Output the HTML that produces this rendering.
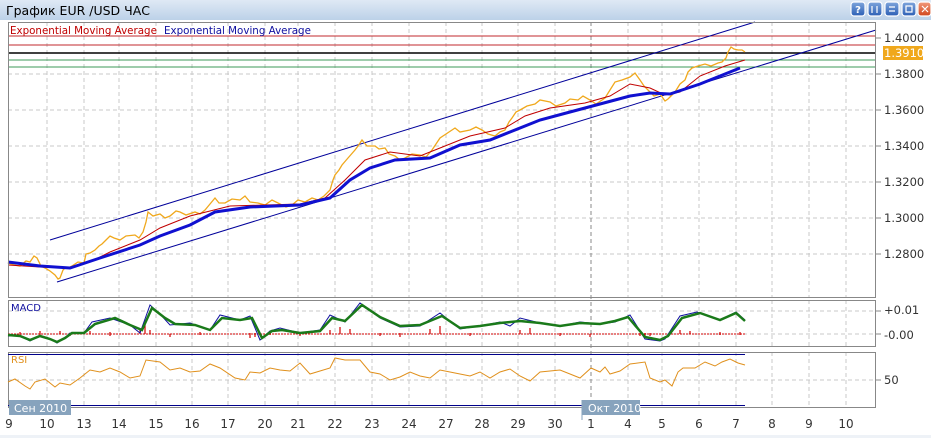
<!DOCTYPE html>
<html><head><meta charset="utf-8"><style>
body{margin:0;width:931px;height:438px;background:#fff;overflow:hidden;font-family:"Liberation Sans","DejaVu Sans",sans-serif}
</style></head><body>
<svg width="931" height="438" viewBox="0 0 931 438" xmlns="http://www.w3.org/2000/svg" font-family="DejaVu Sans, Liberation Sans, sans-serif">
<defs><linearGradient id="tb" x1="0" y1="0" x2="0" y2="1"><stop offset="0" stop-color="#dfe9f5"/><stop offset="1" stop-color="#bcd1e8"/></linearGradient>
<linearGradient id="bt" x1="0" y1="0" x2="0" y2="1"><stop offset="0" stop-color="#7fa6dc"/><stop offset="1" stop-color="#2c5fb5"/></linearGradient>
<linearGradient id="bx" x1="0" y1="0" x2="0" y2="1"><stop offset="0" stop-color="#f29a7c"/><stop offset="1" stop-color="#d0461c"/></linearGradient></defs>
<rect x="0" y="0" width="931" height="20" fill="url(#tb)"/>
<text x="6" y="15" font-size="12.5" fill="#000">График EUR /USD  ЧАС</text>
<g stroke="#fff" stroke-width="1.2" fill="none">
<rect x="851" y="2" width="14" height="14" rx="3" fill="url(#bt)"/>
<rect x="868" y="2" width="14" height="14" rx="3" fill="url(#bt)"/>
<rect x="885" y="2" width="14" height="14" rx="3" fill="url(#bt)"/>
<rect x="902" y="2" width="14" height="14" rx="3" fill="url(#bt)"/>
<rect x="918" y="2" width="13" height="14" rx="3" fill="url(#bx)"/>
<path d="M872 6v7M877 6v7M889 7h6M889 11h6M906 6h6v6h-6z M922 6l6 6M928 6l-6 6"/>
</g>
<text x="858" y="13" font-size="10" fill="#fff" text-anchor="middle" font-weight="bold">?</text>

<g stroke="#c8c8c8" stroke-dasharray="4,3" stroke-width="1">
<path d="M47 22V297M84 22V297M119 22V297M156 22V297M192 22V297M228 22V297M265 22V297M298 22V297M335 22V297M372 22V297M409 22V297M446 22V297M482 22V297M518 22V297M555 22V297M628 22V297M662 22V297M699 22V297M736 22V297M772 22V297M809 22V297M846 22V297"/>
<path d="M8 74H876M8 110H876M8 146H876M8 182H876M8 218H876M8 254H876"/>
<path d="M47 300V346M84 300V346M119 300V346M156 300V346M192 300V346M228 300V346M265 300V346M298 300V346M335 300V346M372 300V346M409 300V346M446 300V346M482 300V346M518 300V346M555 300V346M628 300V346M662 300V346M699 300V346M736 300V346M772 300V346M809 300V346M846 300V346 M8 311H876M8 334H876"/>
<path d="M47 352V407M84 352V407M119 352V407M156 352V407M192 352V407M228 352V407M265 352V407M298 352V407M335 352V407M372 352V407M409 352V407M446 352V407M482 352V407M518 352V407M555 352V407M628 352V407M662 352V407M699 352V407M736 352V407M772 352V407M809 352V407M846 352V407 M8 380H876"/>
</g>
<path d="M591 22V407" stroke="#888" stroke-dasharray="4,3"/>
<path d="M8 36H876M8 45H876" stroke="#c0282c" stroke-width="1"/>
<path d="M8 53H876" stroke="#000" stroke-width="1.5"/>
<path d="M8 60H876M8 67H876" stroke="#3c9a5a" stroke-width="1"/>
<path d="M50 240L755 22" stroke="#00009a" stroke-width="1"/>
<path d="M57 282L876 30" stroke="#00009a" stroke-width="1"/>
<polyline fill="none" stroke="#f0a81c" stroke-width="1.3" points="8,263 14,265 20,266 26,261 30,262 34,256 37,258 41,266 45,268 50,271 55,275 58,279 60,278 63,270 65,268 70,267 72,266 78,262 84,263 86,254 90,253 95,250 99,246 102,244 106,240 110,236 114,238 120,240 126,236 135,235 139,238 143,232 146,222 148,212 153,216 160,214 165,218 170,216 176,211 180,212 186,215 195,212 200,214 205,210 210,204 215,198 219,203 225,203 232,199 240,200 245,196 250,202 258,203 265,205 272,200 280,204 286,207 292,205 298,200 305,202 312,198 318,200 324,196 330,190 333,180 335,175 339,170 342,165 348,158 355,150 358,146 362,140 367,146 375,146 379,149 385,148 389,154 395,156 400,160 405,158 412,154 420,155 426,157 432,150 436,144 440,138 446,134 455,128 460,132 470,130 476,127 482,130 488,134 495,136 500,132 505,130 509,122 512,118 516,112 520,110 527,106 535,104 540,100 550,102 556,106 565,103 570,99 578,100 583,96 590,100 596,104 605,98 610,90 615,82 622,80 630,77 635,73 640,80 644,86 648,90 654,96 660,94 665,101 668,99 672,95 675,92 680,84 685,80 688,72 692,68 698,66 705,64 711,66 718,63 722,62 726,58 728,52 731,47 734,49 738,50 742,50 745,52"/>
<polyline fill="none" stroke="#c00000" stroke-width="1" points="8,265 40,267 70,268 90,262 110,252 140,240 160,228 190,216 230,206 265,205 300,204 325,198 345,180 365,160 390,152 420,156 440,148 470,136 505,128 525,116 550,108 585,103 610,96 630,84 650,88 665,95 680,92 700,76 725,66 745,60"/>
<polyline fill="none" stroke="#1010d0" stroke-width="3" points="8,262 40,266 70,268 100,258 140,245 160,236 190,225 215,212 250,207 300,205 330,198 350,180 370,168 395,160 430,158 460,145 490,140 510,132 540,120 570,112 600,104 630,96 650,93 670,94 700,84 740,68"/>
<rect x="8.5" y="22.5" width="867" height="275" fill="none" stroke="#888"/>
<rect x="8.5" y="300.5" width="867" height="46" fill="none" stroke="#888"/>
<rect x="8.5" y="352.5" width="867" height="55" fill="none" stroke="#888"/>
<text x="10" y="34" font-size="10.3" fill="#c00000">Exponential  Moving  Average</text>
<text x="164" y="34" font-size="10.3" fill="#1010a0">Exponential  Moving  Average</text>
<g font-size="11.5" fill="#333">
<text x="884" y="42">1.4000</text><text x="884" y="78">1.3800</text><text x="884" y="114">1.3600</text><text x="884" y="150">1.3400</text><text x="884" y="186">1.3200</text><text x="884" y="222">1.3000</text><text x="884" y="258">1.2800</text>
</g>
<rect x="883" y="46" width="40" height="14" fill="#f0a81c"/>
<text x="884" y="57" font-size="11.5" fill="#fff">1.3910</text>
<path d="M876 38h5M876 74h5M876 110h5M876 146h5M876 182h5M876 218h5M876 254h5M876 311h5M876 334h5M876 380h5" stroke="#888"/>
<text x="11" y="311" font-size="10" fill="#1010a0">MACD</text>
<g stroke="#d00000" stroke-width="1.2">
<path d="M20 332v4M40 331v4M60 331v3M70 333v3M90 331v3M110 332v4M140 328v6M145 325v9M150 330v4M170 334v3M200 332v3M250 333v5M255 333v4M270 332v3M300 333v3M330 330v4M340 327v7M350 329v5M380 333v3M400 333v4M430 329v5M440 326v8M470 333v3M520 330v4M530 328v6M560 333v3M590 334v3M640 333v3M645 333v5M650 333v3M680 330v4M690 331v3M720 332v3M740 332v3"/>
</g>
<path d="M8 334H745" stroke="#d00000" stroke-dasharray="2,1"/>
<polyline fill="none" stroke="#1010a0" stroke-width="1" points="8,336 20,336 30,341 40,336 50,339 57,343 65,338 70,333 84,333 92,322 110,318 130,325 140,333 150,305 160,314 170,325 190,323 210,330 220,315 240,320 250,316 260,340 270,331 280,328 300,333 320,330 330,315 345,322 360,303 380,318 400,327 420,326 440,313 460,329 480,326 500,322 510,326 520,318 540,323 560,326 580,322 600,324 615,322 630,315 645,339 660,341 665,339 680,316 697,312 720,320 736,312 745,320"/>
<polyline fill="none" stroke="#1a7a1a" stroke-width="2.5" points="8,335 20,336 30,340 40,336 50,339 57,342 65,338 72,333 84,333 95,324 115,318 130,325 142,330 152,308 165,318 175,324 195,325 210,330 222,318 240,320 252,318 262,338 272,331 282,330 300,333 320,331 332,318 345,321 362,305 380,317 400,326 420,325 442,316 460,328 480,326 500,323 520,321 540,323 560,326 580,323 600,324 615,321 628,317 645,337 660,340 668,336 682,318 700,313 720,320 736,313 745,321"/>
<text x="884" y="314" font-size="11.5" fill="#333">+0.01</text>
<text x="884" y="339" font-size="11.5" fill="#333">-0.00</text>
<path d="M8 354.5H745M8 405.5H745" stroke="#00008a" stroke-width="1"/>
<text x="11" y="363" font-size="10" fill="#e0901c">RSI</text>
<polyline fill="none" stroke="#e0901c" stroke-width="1" points="8,382 15,379 25,386 30,389 35,382 45,379 55,387 60,383 70,385 80,378 90,370 100,372 110,368 120,372 130,378 140,376 146,360 160,362 170,370 180,368 190,372 200,371 210,364 220,368 235,378 245,380 250,372 260,373 270,368 280,370 290,371 300,363 310,374 320,371 330,368 335,358 345,360 360,360 370,372 380,374 390,380 400,377 410,372 420,376 430,378 440,370 450,372 460,374 470,376 480,372 490,378 500,372 510,369 520,376 530,381 540,372 550,371 560,370 570,374 580,378 591,368 600,372 605,367 610,374 620,371 630,364 645,362 650,378 660,382 665,380 672,386 678,372 683,368 695,368 705,362 715,366 722,362 730,359 738,363 745,365"/>
<text x="884" y="384" font-size="11.5" fill="#333">50</text>
<rect x="9" y="400" width="62" height="15" fill="#87a3bd"/>
<text x="14" y="412" font-size="11" fill="#fff">Сен 2010</text>
<rect x="582" y="400" width="58" height="15" fill="#87a3bd"/>
<text x="588" y="412" font-size="11" fill="#fff">Окт 2010</text>
<path d="M582 400V420" stroke="#87a3bd"/>
<g font-size="12" fill="#333" text-anchor="middle">
<text x="9" y="428">9</text><text x="47" y="428">10</text><text x="84" y="428">13</text><text x="119" y="428">14</text><text x="156" y="428">15</text><text x="192" y="428">16</text><text x="228" y="428">17</text><text x="265" y="428">20</text><text x="298" y="428">21</text><text x="335" y="428">22</text><text x="372" y="428">23</text><text x="409" y="428">24</text><text x="446" y="428">27</text><text x="482" y="428">28</text><text x="518" y="428">29</text><text x="555" y="428">30</text><text x="591" y="428">1</text><text x="628" y="428">4</text><text x="662" y="428">5</text><text x="699" y="428">6</text><text x="736" y="428">7</text><text x="772" y="428">8</text><text x="809" y="428">9</text><text x="846" y="428">10</text>
</g>
<rect x="0" y="435" width="931" height="3" fill="#eef2f7"/>
</svg>
</body></html>
